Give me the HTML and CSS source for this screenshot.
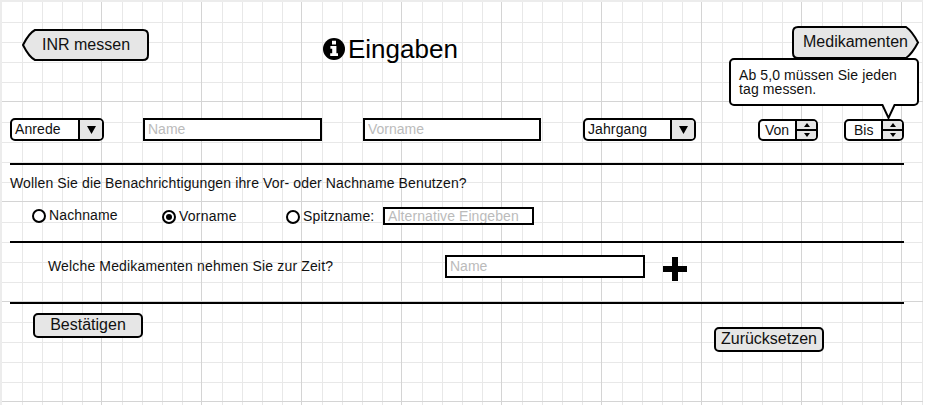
FILE: index.html
```html
<!DOCTYPE html>
<html lang="de">
<head>
<meta charset="utf-8">
<title>Eingaben</title>
<link rel="stylesheet" href="styles.css">
</head>
<body>
<main class="sheet">
  <header class="top">
    <button class="arrow arrow-left">
      <svg class="shape" width="128" height="33" viewBox="0 0 128 33"><path d="M13 1H121Q126 1 126 6V26Q126 31 121 31H13Q7 28 1 16Q7 4 13 1Z"/></svg>
      <span>INR messen</span>
    </button>
    <h1 class="title">
      <svg width="22" height="22" viewBox="0 0 22 22"><circle cx="11" cy="11" r="11"/><path class="cut" d="M9 2.800h4v3.600H9zM7.400 8H13.400v7.200h1.600V18H7.200v-2.800H9.200v-4.400H7.400z"/></svg>
      <span>Eingaben</span>
    </h1>
    <button class="arrow arrow-right">
      <svg class="shape" width="128" height="33" viewBox="0 0 128 33"><path d="M6 1H114Q120 5 126 16.500Q120 28 114 32H6Q1 32 1 27V6Q1 1 6 1Z"/></svg>
      <span>Medikamenten</span>
    </button>
  </header>

  <section class="person">
    <div class="select anrede"><span>Anrede</span><i><svg width="9" height="8"><path d="M0 0H9L4.500 8Z"/></svg></i></div>
    <input class="field name" placeholder="Name">
    <input class="field vorname" placeholder="Vorname">
    <div class="select jahrgang"><span>Jahrgang</span><i><svg width="9" height="8"><path d="M0 0H9L4.500 8Z"/></svg></i></div>
    <div class="spinner von"><span>Von</span><i><b><svg width="6" height="4"><path d="M0 4H6L3 0Z"/></svg></b><b><svg width="6" height="4"><path d="M0 0H6L3 4Z"/></svg></b></i></div>
    <div class="spinner bis"><span>Bis</span><i><b><svg width="6" height="4"><path d="M0 4H6L3 0Z"/></svg></b><b><svg width="6" height="4"><path d="M0 0H6L3 4Z"/></svg></b></i>
      <div class="tooltip"><p>Ab 5,0 müssen Sie jeden tag messen.</p><svg class="tail" width="16" height="17" viewBox="0 0 16 17"><path d="M1 0L7.500 14L14 0"/></svg></div>
    </div>
  </section>

  <section class="names">
    <p>Wollen Sie die Benachrichtigungen ihre Vor- oder Nachname Benutzen?</p>
    <div class="options">
      <label class="opt nach"><span class="radio"></span><span class="cap">Nachname</span></label>
      <label class="opt vor"><span class="radio on"></span><span class="cap">Vorname</span></label>
      <label class="opt spitz"><span class="radio"></span><span class="cap">Spitzname:</span></label>
      <input class="field alt" placeholder="Alternative Eingeben">
    </div>
  </section>

  <section class="meds">
    <p>Welche Medikamenten nehmen Sie zur Zeit?</p>
    <input class="field med" placeholder="Name">
    <svg class="plus" width="24" height="24" viewBox="0 0 24 24"><path d="M9 0h6v9h9v6h-9v9H9v-9H0V9h9z"/></svg>
  </section>

  <footer class="actions">
    <button class="btn">Bestätigen</button>
    <button class="btn reset">Zurücksetzen</button>
  </footer>
</main>
</body>
</html>
```
FILE: styles.css
```css
* { box-sizing: border-box; }
body { margin: 0; background: #fff; overflow: hidden; font: 14px/16px "Liberation Sans", Arial, sans-serif; color: #111; }
.sheet {
  --minor: transparent 21px, #e8e8e8 21px 22px, transparent 22px 41px, #e8e8e8 41px 42px, transparent 42px 61px, #e8e8e8 61px 62px, transparent 62px 81px, #e8e8e8 81px 82px, transparent 82px;
  width: 923px; height: 405px; padding: 25px 0 0 8px;
  border-left: 2px solid #ececec; border-top: 2px solid #ececec;
  padding-top: 24px;
  background-color: #fff;
  background-image:
    linear-gradient(90deg, #d4d4d4 1px, var(--minor)),
    linear-gradient(#d4d4d4 1px, var(--minor));
  background-image:
    linear-gradient(90deg, #d4d4d4 1px, transparent 1px),
    linear-gradient(#d4d4d4 1px, transparent 1px),
    linear-gradient(90deg, var(--minor)),
    linear-gradient(var(--minor));
  background-size: 100px 100px;
  background-position: -1px -1px;
}
p, h1 { margin: 0; font-weight: normal; }
button { font: 16px/18px "Liberation Sans", Arial, sans-serif; color: #111; padding: 0; }
svg { display: block; flex: none; }
.top { display: flex; height: 92px; align-items: flex-start; }
.arrow { position: relative; width: 128px; height: 33px; border: 0; background: none; flex: none; }
.arrow span { position: relative; display: block; white-space: nowrap; }
.shape { position: absolute; left: 0; top: 0; }
.shape path { fill: #e6e6e6; stroke: #000; stroke-width: 2; }
.arrow-left { margin: 3px 0 0 12px; }
.arrow-left span { text-align: left; padding-left: 20px; margin-top: -2px; }
.title { display: flex; align-items: center; gap: 3px; margin: 7px 0 0 173px; width: 160px; height: 32px; font-size: 26px; line-height: 30px; color: #000; }
.title .cut { fill: #fff; }
.arrow-right { margin-left: 309px; }
.arrow-right span { text-align: left; padding-left: 11px; margin-top: -1px; }

.person { display: flex; width: 894px; height: 47px; border-bottom: 2px solid #000; }
.select { display: flex; height: 23px; border: 2px solid #000; border-radius: 5px; background: #fff; overflow: hidden; color: #111; }
.select span { flex: 1; padding-left: 3px; line-height: 18px; letter-spacing: .1px; }
.select i { width: 24px; background: #e6e6e6; border-left: 2px solid #000; display: flex; align-items: center; justify-content: center; }
.field { font: 14px/16px "Liberation Sans", Arial, sans-serif; border: 2px solid #000; border-radius: 0; background: #fff; padding: 0 3px 2px; height: 23px; outline: 0; }
.field::placeholder { color: #bbb; opacity: 1; }
.anrede { width: 94px; }
.name { width: 179px; margin-left: 39px; }
.vorname { width: 178px; margin-left: 41px; }
.jahrgang { width: 113px; margin-left: 42px; }
.spinner { position: relative; display: flex; width: 60px; height: 22px; margin-top: 1px; border: 2px solid #000; border-radius: 5px; background: #fff; }
.spinner > span { flex: 1; padding-left: 5px; line-height: 18px; }
.spinner i { width: 21px; border-left: 2px solid #000; display: flex; flex-direction: column; }
.spinner b { flex: 1; display: flex; align-items: center; justify-content: center; background: #e6e6e6; border-radius: 0 0 3px 0; }
.spinner b:first-child { border-bottom: 2px solid #000; flex: 0 0 10px; border-radius: 0 3px 0 0; }
.von { margin-left: 62px; }
.bis { margin-left: 26px; }
.bis > span { padding-left: 8px; }
.tooltip { position: absolute; right: -17px; bottom: 33px; width: 190px; height: 48px; border: 2px solid #000; border-radius: 5px; background: #fff; padding: 8px 0 0 8px; }
.tooltip p { width: 166px; line-height: 14px; letter-spacing: .1px; }
.tail { position: absolute; left: 150px; top: 44px; }
.tail path { fill: #fff; stroke: #000; stroke-width: 2; }

.names { width: 894px; height: 78px; padding-top: 10px; border-bottom: 2px solid #000; }
.names p { letter-spacing: .13px; }
.options { display: flex; margin-top: 16px; }
.opt { display: flex; gap: 3px; height: 17px; align-items: center; letter-spacing: .13px; }
.cap { margin-top: -2px; }
.radio { display: flex; width: 14px; height: 14px; border: 2px solid #000; border-radius: 50%; background: #fff; align-items: center; justify-content: center; }
.radio.on::after { content: ""; width: 6px; height: 6px; border-radius: 50%; background: #000; }
.nach { margin-left: 22px; width: 130px; }
.vor { width: 124px; margin-top: 1px; letter-spacing: .25px; }
.spitz { width: 97px; margin-top: 1px; }
.alt { width: 151px; height: 18px; padding-bottom: 0; letter-spacing: .08px; }
.meds { display: flex; width: 894px; height: 61px; border-bottom: 2px solid #000; padding: 12px 0 0 38px; }
.meds p { width: 397px; padding-top: 3px; letter-spacing: .15px; }
.med { width: 200px; }
.plus { margin: 2px 0 0 18px; }
.actions { display: flex; padding: 9px 0 0 23px; }
.btn { width: 110px; height: 25px; border: 2px solid #000; border-radius: 5px; background: #e6e6e6; padding-bottom: 2px; }
.reset { margin: 14px 0 0 571px; }
```
